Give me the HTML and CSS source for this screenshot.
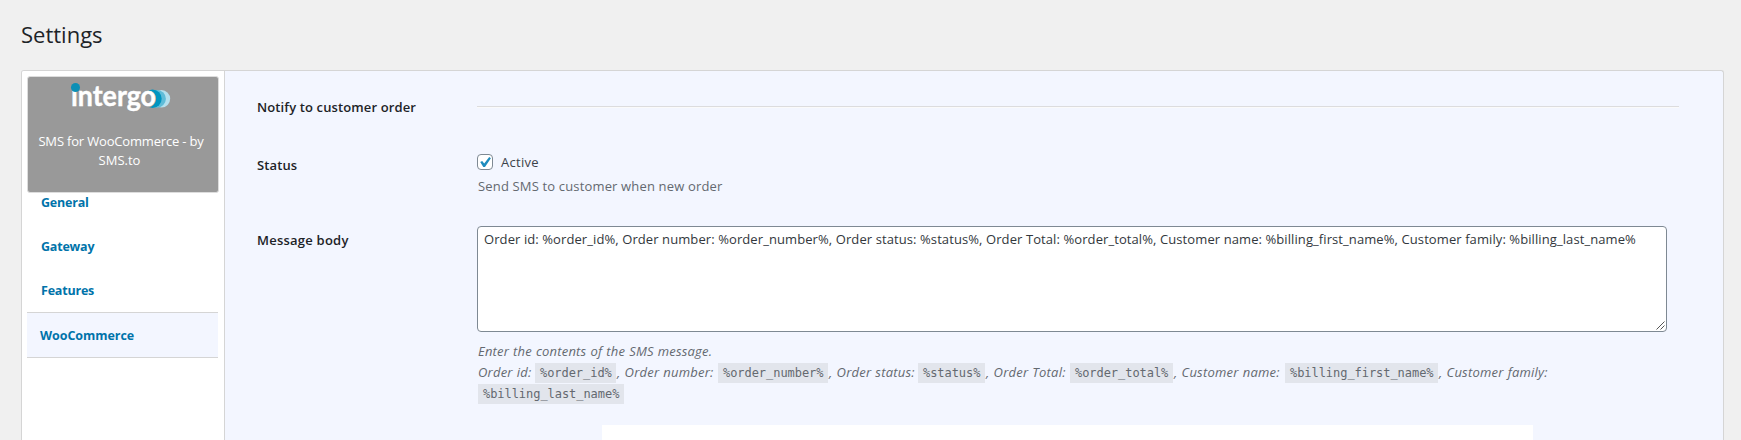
FILE: index.html
```html
<!DOCTYPE html>
<html lang="en">
<head>
<meta charset="utf-8">
<title>Settings</title>
<link rel="stylesheet" href="styles.css">
</head>
<body>
<h1 class="page-title"><span>Settings</span></h1>
<div class="panel">
  <nav class="sidebar">
    <div class="brand">
      <div class="logo">
        <svg width="102" height="36" viewBox="0 0 102 36">
          <circle cx="90.500" cy="16.800" r="8.700" fill="#b5e0ee"/>
          <circle cx="86" cy="16.800" r="8.900" fill="#5fbcd8"/>
          <circle cx="81.500" cy="16.800" r="9.200" fill="#0095c0"/>
          <circle cx="76.500" cy="16.800" r="8.600" fill="#999"/>
          <text class="logo-text" x="0" y="24" textLength="85" lengthAdjust="spacingAndGlyphs">ıntergo</text>
          <circle cx="4.500" cy="5.500" r="4.500" fill="#0b8fb5"/>
        </svg>
      </div>
      <p class="brand-text"><span class="b1">SMS for WooCommerce - by</span><br><span class="b2">SMS.to</span></p>
    </div>
    <a class="tab">General</a>
    <a class="tab">Gateway</a>
    <a class="tab">Features</a>
    <a class="tab active">WooCommerce</a>
  </nav>
  <main class="content">
    <div class="row row-head">
      <div class="label">Notify to customer order</div>
      <hr class="rule">
    </div>
    <div class="row row-status">
      <div class="label">Status</div>
      <div class="field">
        <div class="check-line">
          <span class="checkbox"><svg width="14" height="14" viewBox="0 0 14 14"><path d="M2.200 6.900 4.200 5.900 6.200 8.600 11.200 2.100 12.900 3.300 7 12H5.300Z" fill="#1e8cbe"/></svg></span>
          <span>Active</span>
        </div>
        <p class="hint">Send SMS to customer when new order</p>
      </div>
    </div>
    <div class="row row-body">
      <div class="label">Message body</div>
      <div class="field">
        <div class="textarea">Order id: %order_id%, Order number: %order_number%, Order status: %status%, Order Total: %order_total%, Customer name: %billing_first_name%, Customer family: %billing_last_name%
          <svg class="grip" width="9" height="9" viewBox="0 0 9 9"><path d="M0.500 8.500 8.500 0.500M4.500 8.500 8.500 4.500" stroke="#555" fill="none"/></svg>
        </div>
        <div class="desc">
          <div class="line intro"><span>Enter the contents of the SMS message.</span></div>
          <div class="line"><span class="d2">Order id:</span><code class="k1">%order_id%</code><span class="d3">, Order number:</span><code class="k2">%order_number%</code><span class="d4">, Order status:</span><code class="k3">%status%</code><span class="d5">, Order Total:</span><code class="k4">%order_total%</code><span class="d6">, Customer name:</span><code class="k5">%billing_first_name%</code><span class="d7">, Customer family:</span></div>
          <div class="line"><code class="k6">%billing_last_name%</code></div>
        </div>
      </div>
    </div>
    <div class="notice"></div>
  </main>
</div>
</body>
</html>
```
FILE: styles.css
```css
* { box-sizing: border-box; }
body {
  display: flex;
  flex-direction: column;
  margin: 0;
  height: 440px;
  overflow: hidden;
  background: #f0f0f0;
  color: #3c434a;
  font: 13px/19px "Open Sans", "Noto Sans", sans-serif;
}
.page-title {
  flex: none;
  margin: 0;
  padding: 19px 0 0 21px;
  height: 70px;
  font-size: 22px;
  font-weight: 400;
  line-height: 30px;
  color: #1d2327;
}
.panel {
  flex: 1;
  display: flex;
  width: 1703px;
  margin-left: 21px;
  border: 1px solid #d5d5d5;
  border-bottom: 0;
  border-radius: 3px 3px 0 0;
  background: #f3f6ff;
  overflow: hidden;
}
.sidebar {
  width: 203px;
  padding: 5px 0 0 5px;
  background: #fff;
  border-right: 1px solid #d5d5d5;
  white-space: nowrap;
}
.brand {
  width: 192px;
  height: 117px;
  border: 1px solid #ddd;
  border-radius: 3px;
  background: #999;
  color: #fff;
  text-align: center;
}
.logo { height: 32px; padding: 5px 0 0 43px; text-align: left; }
.logo svg { display: block; overflow: visible; }
.logo-text { font: 700 28px Lato, sans-serif; fill: #fff; stroke: #fff; stroke-width: .4px; }
.brand-text { margin: 0; padding-top: 23px; padding-right: 4px; line-height: 19px; }
.b1 { letter-spacing: -.18px; }
.b2 { padding-right: 3px; }
.tab {
  display: block;
  height: 44px;
  padding-left: 14px;
  font-size: 12.5px;
  font-weight: 700;
  letter-spacing: -.2px;
  line-height: 20px;
  color: #0073aa;
}
.tab.active {
  width: 191px;
  height: 46px;
  margin-top: -13px;
  padding: 13px 0 0 13px;
  border: solid #d5d5d5;
  border-width: 1px 0;
  background: #f3f6ff;
  letter-spacing: -.05px;
}
.content { flex: 1; padding-left: 32px; white-space: nowrap; }
.row { display: flex; }
.label { width: 220px; font-weight: 600; letter-spacing: .12px; color: #1d2327; }
.row-head { height: 59px; padding-top: 26px; }
.row-head .label { padding-top: 1px; }
.rule {
  width: 1202px;
  height: 2px;
  margin: 9px 0 0;
  border: 0;
  border-top: 1px solid #dcdcde;
  border-bottom: 1px solid #fafafa;
}
.row-status { height: 96px; }
.row-status .label { padding-top: 26px; }
.row-status .field { padding-top: 22px; }
.check-line { display: flex; align-items: center; gap: 8px; height: 20px; letter-spacing: .3px; }
.checkbox {
  width: 16px;
  height: 16px;
  border: 1px solid #7e8993;
  border-radius: 4px;
  background: #fff;
}
.checkbox svg { display: block; }
.hint { margin: 5px 0 0 1px; color: #646970; letter-spacing: .16px; }
.row-body .label { padding-top: 5px; letter-spacing: .23px; }
.textarea {
  position: relative;
  width: 1190px;
  height: 106px;
  padding: 3px 6px;
  border: 1px solid #7e8993;
  border-radius: 4px;
  background: #fff;
  color: #32373c;
  letter-spacing: .089px;
}
.grip { position: absolute; right: 1px; bottom: 1px; }
.desc {
  padding: 9px 0 0 1px;
  color: #646970;
  font-style: italic;
  letter-spacing: .22px;
  word-spacing: .5px;
}
.line { display: flex; align-items: center; height: 21px; }
.line span { display: block; padding-left: 1px; }
.line span:first-child { padding-left: 0; }
code {
  height: 20px;
  padding: 0 5px;
  background: #e2e5ec;
  font: 12px/20px "DejaVu Sans Mono", monospace;
  letter-spacing: -.05px;
}
.intro { letter-spacing: .19px; }
.d2 { width: 57px; }
.d3 { width: 102px; }
.d4 { width: 90px; }
.d5 { width: 85px; }
.d6 { width: 112px; }
.k1 { width: 81px; }
.k2 { width: 110px; }
.k3 { width: 67px; }
.k4 { width: 103px; }
.k5 { width: 153px; }
.k6 { width: 146px; }
.notice { width: 931px; height: 16px; margin: 21px 0 0 345px; background: #fff; }
```
